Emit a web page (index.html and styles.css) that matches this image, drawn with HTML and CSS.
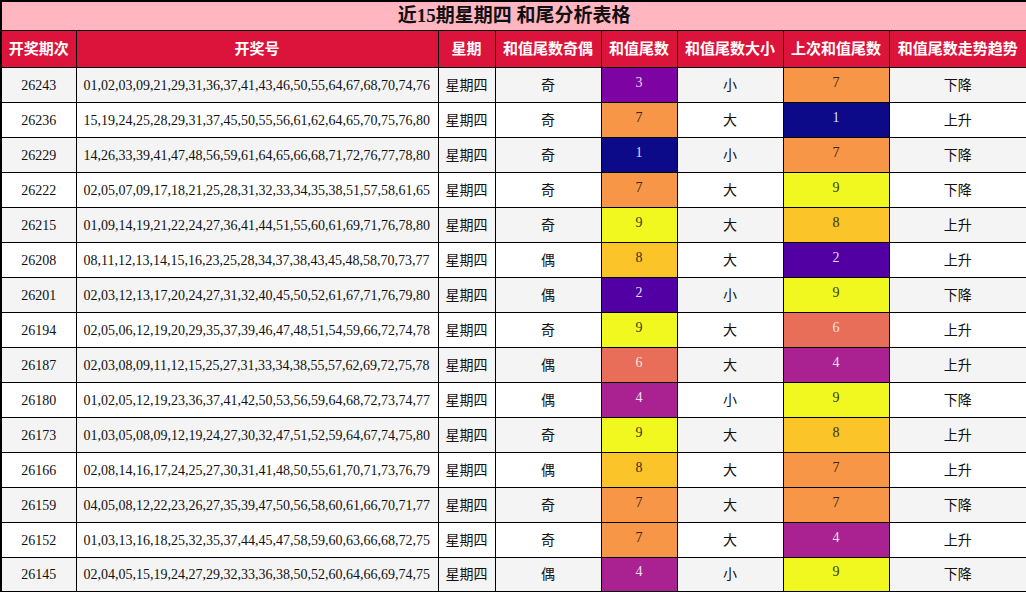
FILE: index.html
```html
<!DOCTYPE html>
<html lang="zh">
<head>
<meta charset="utf-8">
<title>近15期星期四 和尾分析表格</title>
<link rel="stylesheet" href="styles.css">
</head>
<body>
<table class="tbl">
  <colgroup>
    <col class="c1"><col class="c2"><col class="c3"><col class="c4"><col class="c5"><col class="c6"><col class="c7"><col class="c8">
  </colgroup>
  <thead>
    <tr class="title-row"><th colspan="8">近15期星期四 和尾分析表格</th></tr>
    <tr class="head-row">
      <th>开奖期次</th><th>开奖号</th><th>星期</th><th>和值尾数奇偶</th><th>和值尾数</th><th>和值尾数大小</th><th>上次和值尾数</th><th>和值尾数走势趋势</th>
    </tr>
  </thead>
  <tbody>
    <tr><td>26243</td><td class="nums">01,02,03,09,21,29,31,36,37,41,43,46,50,55,64,67,68,70,74,76</td><td>星期四</td><td>奇</td><td class="t t3">3</td><td>小</td><td class="t t7">7</td><td>下降</td></tr>
    <tr><td>26236</td><td class="nums">15,19,24,25,28,29,31,37,45,50,55,56,61,62,64,65,70,75,76,80</td><td>星期四</td><td>奇</td><td class="t t7">7</td><td>大</td><td class="t t1">1</td><td>上升</td></tr>
    <tr><td>26229</td><td class="nums">14,26,33,39,41,47,48,56,59,61,64,65,66,68,71,72,76,77,78,80</td><td>星期四</td><td>奇</td><td class="t t1">1</td><td>小</td><td class="t t7">7</td><td>下降</td></tr>
    <tr><td>26222</td><td class="nums">02,05,07,09,17,18,21,25,28,31,32,33,34,35,38,51,57,58,61,65</td><td>星期四</td><td>奇</td><td class="t t7">7</td><td>大</td><td class="t t9">9</td><td>下降</td></tr>
    <tr><td>26215</td><td class="nums">01,09,14,19,21,22,24,27,36,41,44,51,55,60,61,69,71,76,78,80</td><td>星期四</td><td>奇</td><td class="t t9">9</td><td>大</td><td class="t t8">8</td><td>上升</td></tr>
    <tr><td>26208</td><td class="nums">08,11,12,13,14,15,16,23,25,28,34,37,38,43,45,48,58,70,73,77</td><td>星期四</td><td>偶</td><td class="t t8">8</td><td>大</td><td class="t t2">2</td><td>上升</td></tr>
    <tr><td>26201</td><td class="nums">02,03,12,13,17,20,24,27,31,32,40,45,50,52,61,67,71,76,79,80</td><td>星期四</td><td>偶</td><td class="t t2">2</td><td>小</td><td class="t t9">9</td><td>下降</td></tr>
    <tr><td>26194</td><td class="nums">02,05,06,12,19,20,29,35,37,39,46,47,48,51,54,59,66,72,74,78</td><td>星期四</td><td>奇</td><td class="t t9">9</td><td>大</td><td class="t t6">6</td><td>上升</td></tr>
    <tr><td>26187</td><td class="nums">02,03,08,09,11,12,15,25,27,31,33,34,38,55,57,62,69,72,75,78</td><td>星期四</td><td>偶</td><td class="t t6">6</td><td>大</td><td class="t t4">4</td><td>上升</td></tr>
    <tr><td>26180</td><td class="nums">01,02,05,12,19,23,36,37,41,42,50,53,56,59,64,68,72,73,74,77</td><td>星期四</td><td>偶</td><td class="t t4">4</td><td>小</td><td class="t t9">9</td><td>下降</td></tr>
    <tr><td>26173</td><td class="nums">01,03,05,08,09,12,19,24,27,30,32,47,51,52,59,64,67,74,75,80</td><td>星期四</td><td>奇</td><td class="t t9">9</td><td>大</td><td class="t t8">8</td><td>上升</td></tr>
    <tr><td>26166</td><td class="nums">02,08,14,16,17,24,25,27,30,31,41,48,50,55,61,70,71,73,76,79</td><td>星期四</td><td>偶</td><td class="t t8">8</td><td>大</td><td class="t t7">7</td><td>上升</td></tr>
    <tr><td>26159</td><td class="nums">04,05,08,12,22,23,26,27,35,39,47,50,56,58,60,61,66,70,71,77</td><td>星期四</td><td>奇</td><td class="t t7">7</td><td>大</td><td class="t t7">7</td><td>下降</td></tr>
    <tr><td>26152</td><td class="nums">01,03,13,16,18,25,32,35,37,44,45,47,58,59,60,63,66,68,72,75</td><td>星期四</td><td>奇</td><td class="t t7">7</td><td>大</td><td class="t t4">4</td><td>上升</td></tr>
    <tr><td>26145</td><td class="nums">02,04,05,15,19,24,27,29,32,33,36,38,50,52,60,64,66,69,74,75</td><td>星期四</td><td>偶</td><td class="t t4">4</td><td>小</td><td class="t t9">9</td><td>下降</td></tr>
  </tbody>
</table>
</body>
</html>
```
FILE: styles.css
```css
html, body {
  margin: 0;
  padding: 0;
  background: #fff;
}
body {
  font-family: "Liberation Serif", "Noto Sans CJK SC", serif;
  color: #111;
}
.tbl {
  width: 1026px;
  border-collapse: collapse;
  table-layout: fixed;
  border: 2px solid #000;
}
.c1 { width: 75px; }
.c2 { width: 362px; }
.c3 { width: 57px; }
.c4 { width: 106px; }
.c5 { width: 76px; }
.c6 { width: 106px; }
.c7 { width: 106px; }
.c8 { width: 138px; }
.tbl th, .tbl td {
  border: 1px solid #000;
  padding: 0;
  text-align: center;
  vertical-align: middle;
  white-space: nowrap;
  overflow: hidden;
}
.title-row { height: 29px; }
.title-row th {
  background: #ffb6c1;
  font-size: 19px;
  font-weight: bold;
  color: #111;
  line-height: 24px;
}
.head-row { height: 37px; }
.head-row th {
  background: #dc143c;
  color: #fff;
  font-size: 15px;
  font-weight: bold;
  line-height: 20px;
}
.tbl tbody tr { height: 35px; }
.tbl td {
  font-size: 14px;
  line-height: 18px;
  padding-top: 2px;
}
.tbl td.nums {
  text-align: left;
  padding-left: 7px;
}
.tbl tbody tr:nth-child(odd) td { background: #f4f4f4; }
.tbl tbody tr:nth-child(even) td { background: #fff; }
.tbl td.t { padding-top: 0; padding-bottom: 4px; }
.tbl tbody tr td.t1 { background: #0d0a8a; color: #dcdcf0; }
.tbl tbody tr td.t2 { background: #5200a3; color: #e6dcf4; }
.tbl tbody tr td.t3 { background: #7d04a3; color: #e6d2f0; }
.tbl tbody tr td.t4 { background: #aa2292; color: #f4e0f0; }
.tbl tbody tr td.t6 { background: #e86e5a; color: #fbe4dc; }
.tbl tbody tr td.t7 { background: #f79646; color: #3a2412; }
.tbl tbody tr td.t8 { background: #fbc52a; color: #3a300c; }
.tbl tbody tr td.t9 { background: #f0f820; color: #3a3c08; }
```
